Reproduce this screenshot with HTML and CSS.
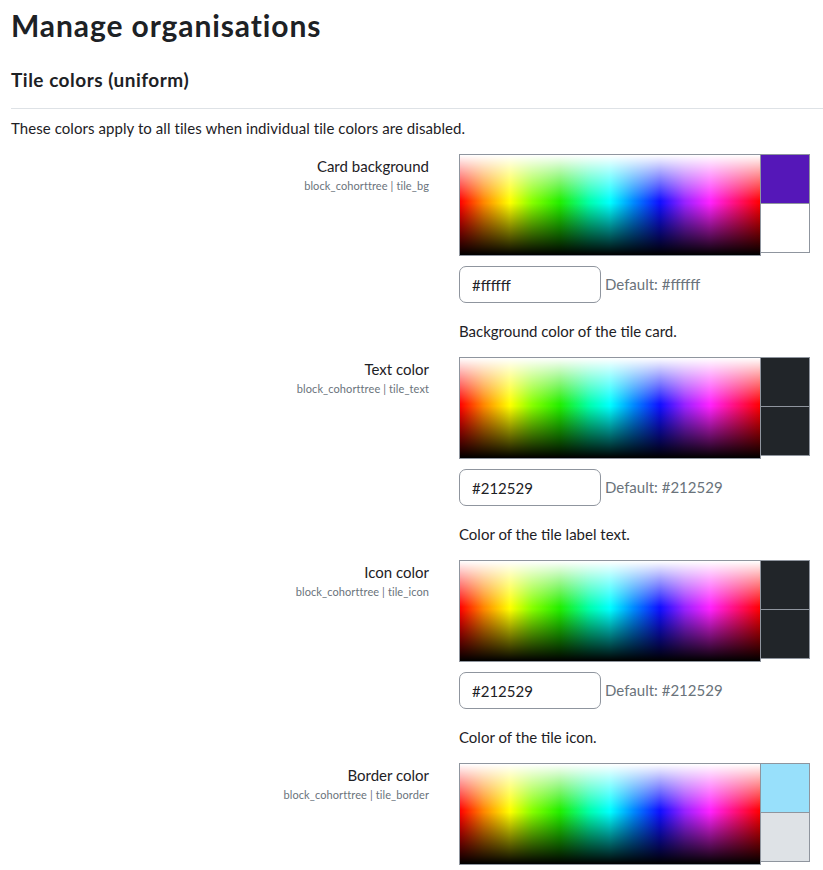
FILE: index.html
```html
<!DOCTYPE html>
<html lang="en">
<head>
<meta charset="utf-8">
<title>Manage organisations</title>
<link rel="stylesheet" href="styles.css">
</head>
<body>
<div class="page">
  <h2 class="title">Manage organisations</h2>
  <h3 class="section">Tile colors (uniform)</h3>
  <hr class="rule">
  <p class="intro">These colors apply to all tiles when individual tile colors are disabled.</p>

  <div class="setting">
    <div class="label">
      <div class="name">Card background</div>
      <div class="key">block_cohorttree | tile_bg</div>
    </div>
    <div class="control">
      <div class="picker">
        <div class="gradient"></div>
        <div class="swatches">
          <div class="swatch sw-purple"></div>
          <div class="swatch sw-white"></div>
        </div>
      </div>
      <div class="valuerow">
        <input class="hex" type="text" value="#ffffff">
        <span class="default">Default: #ffffff</span>
      </div>
      <div class="desc">Background color of the tile card.</div>
    </div>
  </div>

  <div class="setting">
    <div class="label">
      <div class="name">Text color</div>
      <div class="key">block_cohorttree | tile_text</div>
    </div>
    <div class="control">
      <div class="picker">
        <div class="gradient"></div>
        <div class="swatches">
          <div class="swatch sw-dark"></div>
          <div class="swatch sw-dark"></div>
        </div>
      </div>
      <div class="valuerow">
        <input class="hex" type="text" value="#212529">
        <span class="default">Default: #212529</span>
      </div>
      <div class="desc">Color of the tile label text.</div>
    </div>
  </div>

  <div class="setting">
    <div class="label">
      <div class="name">Icon color</div>
      <div class="key">block_cohorttree | tile_icon</div>
    </div>
    <div class="control">
      <div class="picker">
        <div class="gradient"></div>
        <div class="swatches">
          <div class="swatch sw-dark"></div>
          <div class="swatch sw-dark"></div>
        </div>
      </div>
      <div class="valuerow">
        <input class="hex" type="text" value="#212529">
        <span class="default">Default: #212529</span>
      </div>
      <div class="desc">Color of the tile icon.</div>
    </div>
  </div>

  <div class="setting">
    <div class="label">
      <div class="name">Border color</div>
      <div class="key">block_cohorttree | tile_border</div>
    </div>
    <div class="control">
      <div class="picker">
        <div class="gradient"></div>
        <div class="swatches">
          <div class="swatch sw-blue"></div>
          <div class="swatch sw-gray"></div>
        </div>
      </div>
    </div>
  </div>
</div>
</body>
</html>
```
FILE: styles.css
```css
html, body {
  margin: 0;
  padding: 0;
  background: #ffffff;
}

body {
  font-family: "Lato", "Noto Sans", "Liberation Sans", sans-serif;
  font-size: 15px;
  line-height: 1.5;
  color: #1d2125;
  overflow: hidden;
}

.page {
  padding: 0 0 0 11px;
}

.title {
  margin: 0;
  padding-top: 7px;
  font-size: 30px;
  line-height: 36px;
  font-weight: 700;
  letter-spacing: 0.9px;
}

.section {
  margin: 25px 0 0 0;
  font-size: 19px;
  line-height: 23px;
  font-weight: 700;
  letter-spacing: 0.5px;
}

.rule {
  margin: 17px 0 0 0;
  border: 0;
  border-top: 1px solid #dee2e6;
  height: 0;
}

.intro {
  margin: 8px 0 0 0;
  line-height: 22px;
  letter-spacing: 0.07px;
}

.setting {
  display: grid;
  grid-template-columns: 418px 1fr;
  column-gap: 30px;
  margin-top: 15px;
}

.label {
  text-align: right;
  padding-top: 1px;
}

.name {
  line-height: 22px;
}

.key {
  font-size: 11px;
  line-height: 17px;
  color: #6a737b;
  letter-spacing: 0.1px;
}

.control {
  display: flex;
  flex-direction: column;
  align-items: flex-start;
}

.picker {
  display: flex;
  align-items: flex-start;
}

.gradient {
  width: 300px;
  height: 100px;
  border: 1px solid #8f959e;
  background:
    linear-gradient(to bottom, #ffffff 0%, rgba(255,255,255,0.6) 18%, rgba(255,255,255,0) 46%, rgba(0,0,0,0) 48%, rgba(0,0,0,0.5) 74%, #000000 100%),
    linear-gradient(to right, #ff0000 0%, #ff8800 8%, #ffff00 16.67%, #88ff00 24%, #22ee00 33.33%, #00ffaa 43%, #00ffff 50%, #0088ff 58%, #1010ff 66.67%, #9922ff 75%, #ff22ff 83.33%, #ff1188 91%, #ff0000 100%);
}

.swatches {
  display: flex;
  flex-direction: column;
  margin-left: -1px;
}

.swatch {
  width: 48px;
  height: 48px;
  border: 1px solid #8f959e;
}

.swatch + .swatch {
  margin-top: -1px;
}

.sw-purple { background: #5517b8; }
.sw-white { background: #ffffff; }
.sw-dark { background: #212529; }
.sw-blue { background: #98e0fb; }
.sw-gray { background: #dee2e6; }

.valuerow {
  display: flex;
  align-items: center;
  margin-top: 10px;
}

.hex {
  box-sizing: border-box;
  width: 142px;
  height: 37px;
  padding: 0 12px;
  border: 1px solid #8f959e;
  border-radius: 7px;
  font-family: inherit;
  font-size: 15px;
  color: #1d2125;
  background: #ffffff;
  outline: none;
}

.default {
  margin-left: 4px;
  color: #6a737b;
}

.desc {
  margin-top: 17px;
  line-height: 22px;
}
```
